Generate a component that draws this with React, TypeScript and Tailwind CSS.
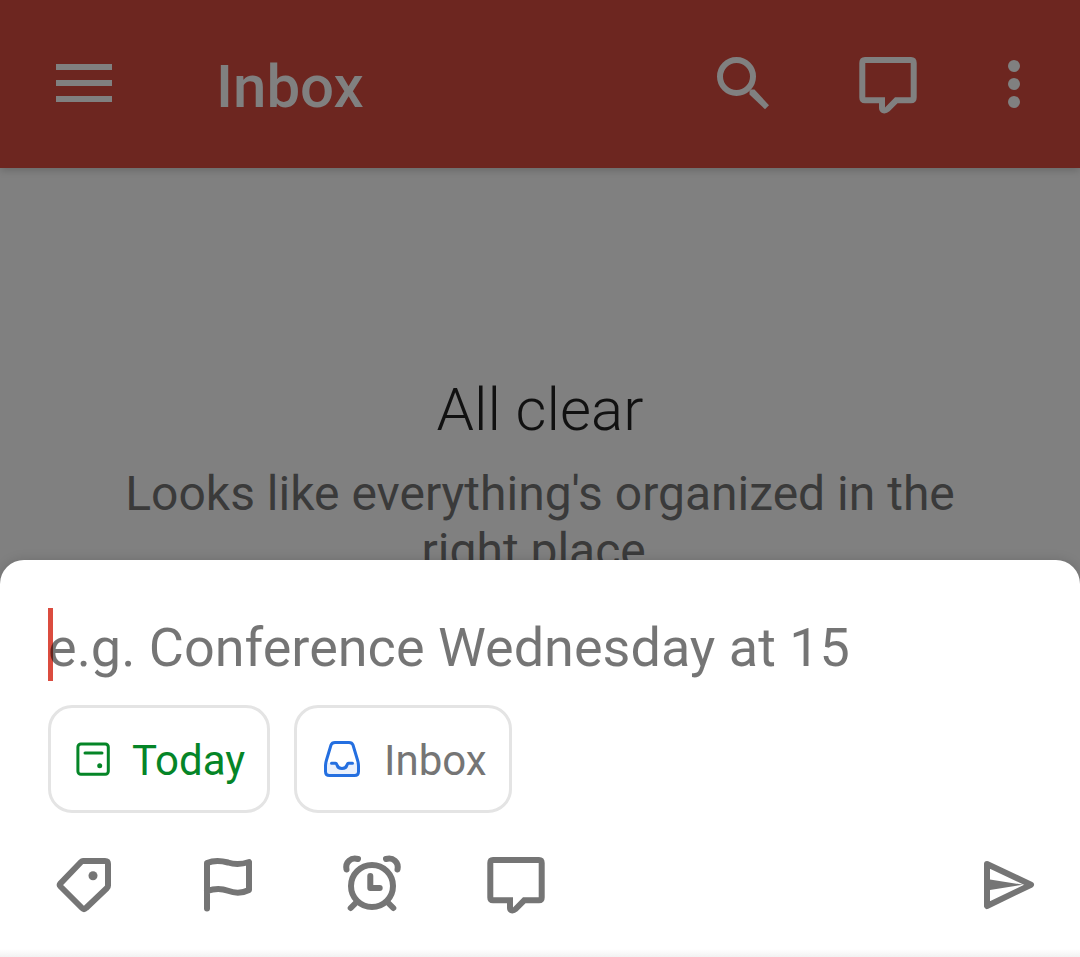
import type { ReactNode } from 'react';

function Icon({ children }: { children: ReactNode }) {
  return (
    <svg
      viewBox="0 0 72 72"
      className="size-[72px] shrink-0"
      fill="none"
      stroke="currentColor"
      strokeWidth="6"
      strokeLinecap="round"
      strokeLinejoin="round"
      aria-hidden="true"
    >
      {children}
    </svg>
  );
}

function CommentIcon() {
  return (
    <Icon>
      <path
        d="M13 9H59Q64.700 9 64.700 15V49.500Q64.700 55.300 59 55.300H45.500L37.500 63.300Q34.500 66 31 65.300Q27 64 27 60V55.300H13Q7.300 55.300 7.300 49.500V15Q7.300 9 13 9ZM13.300 15V49.300H33V59.500L43 49.300H58.700V15Z"
        fill="currentColor"
        fillRule="evenodd"
        stroke="none"
      />
    </Icon>
  );
}

function TodayIcon() {
  return (
    <svg
      viewBox="0 0 48 48"
      className="size-12 shrink-0 text-[#058527]"
      fill="none"
      stroke="currentColor"
      strokeWidth="3"
      strokeLinecap="round"
      aria-hidden="true"
    >
      <rect x="8.900" y="8.900" width="30.400" height="30.400" rx="3" />
      <path d="M16 18H33" />
      <circle cx="30.700" cy="30.700" r="2.500" fill="currentColor" stroke="none" />
    </svg>
  );
}

function InboxIcon() {
  return (
    <svg
      viewBox="-3 -3 54 54"
      className="size-[54px] shrink-0 text-[#246fe0]"
      fill="none"
      stroke="currentColor"
      strokeWidth="3"
      strokeLinecap="round"
      strokeLinejoin="round"
      aria-hidden="true"
    >
      <path d="M8 28H16Q18 28 19 31Q20 34 24 34Q28 34 29 31Q30 28 32 28H40V36Q40 40 36 40H12Q8 40 8 36Z" fill="#e9f0fc" stroke="none" />
      <path d="M17 7.500H31Q34 7.500 35 10L39.500 25Q40.500 28.500 40.500 31V36.500Q40.500 40.500 36.500 40.500H11.500Q7.500 40.500 7.500 36.500V31Q7.500 28.500 8.500 25L13 10Q14 7.500 17 7.500Z" />
      <path d="M13.500 28.300H17.500Q18.500 28.300 19 30Q20 33.500 24 33.500Q28 33.500 29 30Q29.500 28.300 30.500 28.300H34.500" />
    </svg>
  );
}

function IconButton({ label, children }: { label: string; children: ReactNode }) {
  return (
    <button type="button" aria-label={label} className="shrink-0">
      {children}
    </button>
  );
}

function Chip({ icon, label, tone }: { icon: ReactNode; label: string; tone: string }) {
  return (
    <button
      type="button"
      className="flex h-[108px] items-center gap-[15px] rounded-3xl border-3 border-[#e4e4e4] pr-[22px] pl-[18px] text-[42px] leading-[48px]"
    >
      {icon}
      <span className={`pt-1 ${tone}`}>{label}</span>
    </button>
  );
}

export default function App() {
  return (
    <div className="flex min-h-screen flex-col bg-[#808080] font-[Roboto,sans-serif]">
      <header className="relative z-10 flex h-[168px] shrink-0 items-center bg-[#6d2620] pr-[30px] pl-12 text-[#808080] shadow-[0_2px_8px_rgba(0,0,0,0.2)]">
        <IconButton label="Open menu">
          <Icon>
            <path d="M8 19H64M8 35H64M8 51H64" strokeLinecap="butt" />
          </Icon>
        </IconButton>
        <h1 className="ml-24 flex-1 pt-1.5 text-[60px] leading-[72px] font-medium">Inbox</h1>
        <div className="flex items-center gap-[72px]">
          <IconButton label="Search">
            <Icon>
              <circle cx="28.500" cy="28.500" r="16.500" />
              <path d="M41.500 46.500V43L43 41.500H46.500L61 57.300L57 61.300Z" fill="currentColor" stroke="none" />
            </Icon>
          </IconButton>
          <IconButton label="Comments">
            <CommentIcon />
          </IconButton>
          <button type="button" aria-label="More options" className="-ml-[18px] shrink-0">
            <Icon>
              <g fill="currentColor" stroke="none">
                <circle cx="36" cy="18" r="6" />
                <circle cx="36" cy="36" r="6" />
                <circle cx="36" cy="54" r="6" />
              </g>
            </Icon>
          </button>
        </div>
      </header>

      <main className="flex-1 px-24 pt-[207px] text-center">
        <h2 className="text-[60px] leading-[70px] font-light text-[#111111]">All clear</h2>
        <p className="mt-5 -mb-6 text-[48px] leading-[57px] text-[#3a3a3a]">
          Looks like everything's organized in the right place.
        </p>
      </main>

      <section
        aria-label="Add task"
        className="relative -mt-6 shrink-0 rounded-t-3xl bg-white px-12 pt-12 text-[#757575] shadow-[0_0_12px_rgba(0,0,0,0.15)]"
      >
        <div className="relative">
          <span className="absolute inset-y-0 left-0 w-[5px] bg-[#db4c3f]" />
          <input
            type="text"
            aria-label="Task name"
            placeholder="e.g. Conference Wednesday at 15"
            className="relative block h-[73px] w-full bg-transparent pt-1.5 text-[54px] caret-[#db4c3f] outline-none placeholder:text-black/54"
          />
        </div>
        <div className="mt-6 flex gap-6">
          <Chip label="Today" tone="text-[#058527]" icon={<TodayIcon />} />
          <Chip label="Inbox" tone="text-[#757575]" icon={<InboxIcon />} />
        </div>
        <div className="-mr-3 flex items-center justify-between pt-[35px] pb-[29px]">
          <div className="flex gap-[72px]">
            <IconButton label="Labels">
              <Icon>
                <path d="M35 13H57Q60 13 60 16V37.500Q60 39 59 40L38 60Q36 62 34 60L12.500 38.500Q11 37 12.500 35.300L33 14Q34 13 35 13Z" />
                <circle cx="45" cy="27.700" r="4.500" fill="currentColor" stroke="none" />
              </Icon>
            </IconButton>
            <IconButton label="Priority">
              <Icon>
                <path d="M15 60.500V15C22 12 29 12.500 36 14.500C43 16.800 51 16 57 14V42C51 45 43 45.500 36 42.800C29 40 22 40.500 15 43" />
              </Icon>
            </IconButton>
            <IconButton label="Reminders">
              <Icon>
                <circle cx="36" cy="38" r="21" />
                <path d="M34.300 28V40H43.700M20.700 54L14.700 60M51.300 54L57.300 60M10.500 21.500C9 14 15 9 22 11M61.500 21.500C63 14 57 9 50 11" />
              </Icon>
            </IconButton>
            <IconButton label="Comment">
              <CommentIcon />
            </IconButton>
          </div>
          <IconButton label="Send">
            <Icon>
              <path d="M15 16L59 36.700L15 58Z" />
              <path d="M18 31.500L51 36.700L18 42Z" fill="currentColor" stroke="none" />
            </Icon>
          </IconButton>
        </div>
        <div className="-mx-12 h-2 bg-linear-to-b from-white to-[#f2f2f2]" />
      </section>
    </div>
  );
}
